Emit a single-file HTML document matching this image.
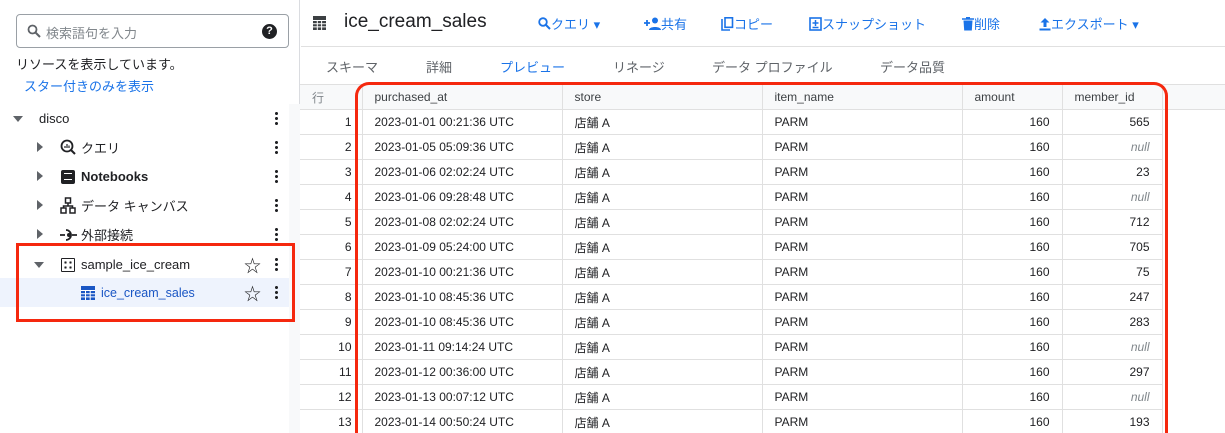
<!DOCTYPE html>
<html style="width:1225px;height:433px;overflow:hidden"><head><meta charset="utf-8"><style>
*{box-sizing:border-box;margin:0;padding:0}
body{width:1225px;height:433px;overflow:hidden;background:#fff;font-family:"Liberation Sans","Noto Sans CJK JP",sans-serif;color:#202124;position:relative}
.abs{position:absolute}
.left{left:0;top:0;width:300px;height:433px;border-right:1px solid #dadce0}
.search{left:16px;top:14px;width:273px;height:34px;border:1px solid #9aa0a6;border-radius:4px}
.tr{position:absolute;left:0;width:289px;height:29px;font-size:13px;display:flex;align-items:center}
.dots{position:absolute;left:275px;top:7px;width:3px;height:15px;background:radial-gradient(circle,#202124 1.4px,transparent 1.6px) 0 0/3px 5px repeat-y}
.tri-r{position:absolute;width:0;height:0;border-left:6px solid #5f6368;border-top:5px solid transparent;border-bottom:5px solid transparent}
.tri-d{position:absolute;width:0;height:0;border-top:6px solid #5f6368;border-left:5px solid transparent;border-right:5px solid transparent}
.tb{font-size:13px;color:#1a73e8;top:14px;display:flex;align-items:center}
.tab{top:57px;font-size:13px;color:#5f6368}
table{position:absolute;left:300px;top:84px;border-collapse:collapse;font-size:12px}
td,th{height:25px;border-bottom:1px solid #e0e0e0;border-right:1px solid #e0e0e0;padding:0 12px;white-space:nowrap;font-weight:normal}
th{background:#f8f9fa;color:#3c4043;text-align:left;border-top:1px solid #e0e0e0;position:relative}
td.n{text-align:right;padding-right:10px;color:#202124}
td.r{text-align:right}
.null{color:#80868b;font-style:italic}
</style></head><body>
<div class="abs left">
 <div class="abs search">
  <svg class="abs" style="left:10px;top:9px" width="14" height="14" viewBox="0 0 14 14"><circle cx="5.5" cy="5.5" r="4" fill="none" stroke="#5f6368" stroke-width="1.8"/><path d="M8.5 8.5L13 13" stroke="#5f6368" stroke-width="2"/></svg>
  <span class="abs" style="left:29px;top:8px;font-size:13px;color:#80868b">検索語句を入力</span>
  <div class="abs" style="left:245px;top:9px;width:15px;height:15px;border-radius:50%;background:#202124;color:#fff;font-size:11px;font-weight:bold;text-align:center;line-height:15px">?</div>
 </div>
 <div class="abs" style="left:16px;top:54px;font-size:13px">リソースを表示しています。</div>
 <div class="abs" style="left:24px;top:76px;font-size:13px;color:#1a73e8">スター付きのみを表示</div>
 <div class="abs" style="left:289px;top:104px;width:11px;height:329px;background:#f8f9fa"></div>

 <div class="tr" style="top:104px"><div class="tri-d" style="left:13px;top:12px"></div><span class="abs" style="left:39px">disco</span><div class="dots"></div></div>
 <div class="tr" style="top:133px"><div class="tri-r" style="left:37px;top:9px"></div>
  <svg class="abs" style="left:60px;top:6px" width="16" height="16" viewBox="0 0 16 16"><circle cx="7" cy="7" r="5.5" fill="none" stroke="#202124" stroke-width="1.8"/><path d="M11 11l4 4" stroke="#202124" stroke-width="2"/><path d="M5 9V7M7 9V5M9 9V6.5" stroke="#202124" stroke-width="1.2"/></svg>
  <span class="abs" style="left:81px">クエリ</span><div class="dots"></div></div>
 <div class="tr" style="top:162px"><div class="tri-r" style="left:37px;top:9px"></div>
  <div class="abs" style="left:61px;top:8px;width:14px;height:14px;background:#202124;border-radius:2px"><div style="margin:3px 3px;height:7px;border-top:1.5px solid #fff;border-bottom:1.5px solid #fff"></div></div>
  <span class="abs" style="left:81px;font-weight:bold">Notebooks</span><div class="dots"></div></div>
 <div class="tr" style="top:191px"><div class="tri-r" style="left:37px;top:9px"></div>
  <svg class="abs" style="left:60px;top:6px" width="16" height="17" viewBox="0 0 16 17"><rect x="5.5" y="1" width="5" height="5" fill="none" stroke="#202124" stroke-width="1.5"/><rect x="1" y="11" width="5" height="5" fill="none" stroke="#202124" stroke-width="1.5"/><rect x="10" y="11" width="5" height="5" fill="none" stroke="#202124" stroke-width="1.5"/><path d="M8 6v3M3.5 11V9h9v2" fill="none" stroke="#202124" stroke-width="1.5"/></svg>
  <span class="abs" style="left:81px">データ キャンバス</span><div class="dots"></div></div>
 <div class="tr" style="top:220px"><div class="tri-r" style="left:37px;top:9px"></div>
  <svg class="abs" style="left:60px;top:8px" width="17" height="14" viewBox="0 0 17 14"><path d="M0 7h5M12 7h5" stroke="#202124" stroke-width="1.8"/><path d="M6 2a5 5 0 1 1 0 10" fill="none" stroke="#202124" stroke-width="1.8"/><circle cx="9" cy="7" r="2" fill="#202124"/></svg>
  <span class="abs" style="left:81px">外部接続</span><div class="dots"></div></div>
 <div class="tr" style="top:250px"><div class="tri-d" style="left:34px;top:12px"></div>
  <div class="abs" style="left:61px;top:8px;width:14px;height:14px;border:1.8px solid #202124;border-radius:1px;background:radial-gradient(circle,#202124 1.1px,transparent 1.3px) 1px 1px/5px 5px"></div>
  <span class="abs" style="left:81px">sample_ice_cream</span><span class="abs" style="left:244px;font-size:17px">☆</span><div class="dots"></div></div>
 <div class="tr" style="top:278px"><div class="abs" style="left:0;top:0;width:289px;height:29px;background:#eef3fd"></div>
  <svg class="abs" style="left:81px;top:8px" width="14" height="14" viewBox="0 0 14 14"><rect width="14" height="14" fill="#1a56c4"/><path d="M0 4.5h14M0 7.7h14M0 10.9h14M4.5 4.5V14M9.2 4.5V14" stroke="#fff" stroke-width="1"/></svg>
  <span class="abs" style="left:101px;color:#1a56c4;font-size:12.5px">ice_cream_sales</span><span class="abs" style="left:244px;font-size:17px">☆</span><div class="dots"></div></div>
 <div class="abs" style="left:16px;top:243px;width:279px;height:79px;border:3px solid #f5280e"></div>
</div>

<svg class="abs" style="left:313px;top:16px" width="13" height="14" viewBox="0 0 13 14"><rect width="13" height="14" fill="#3c4043"/><path d="M0 4.5h13M0 7.7h13M0 10.9h13M4.3 4.5V14M8.6 4.5V14" stroke="#fff" stroke-width="1"/></svg>
<div class="abs" style="left:344px;top:11px;font-size:19px">ice_cream_sales</div>
<div class="abs tb" style="left:538px"><svg width="13" height="13" viewBox="0 0 13 13"><circle cx="5" cy="5" r="3.8" fill="none" stroke="#1a73e8" stroke-width="1.8"/><path d="M8 8l4 4" stroke="#1a73e8" stroke-width="2"/></svg>クエリ ▾</div>
<div class="abs tb" style="left:644px"><svg width="17" height="13" viewBox="0 0 17 13"><path d="M0 6h6M3 3v6" stroke="#1a73e8" stroke-width="1.8"/><circle cx="11" cy="3.5" r="3" fill="#1a73e8"/><path d="M5 13c0-4 12-4 12 0z" fill="#1a73e8"/></svg>共有</div>
<div class="abs tb" style="left:721px"><svg width="13" height="14" viewBox="0 0 13 14"><path d="M1 2v11h8" fill="none" stroke="#1a73e8" stroke-width="1.6"/><rect x="4" y="0.8" width="7.5" height="9.5" fill="none" stroke="#1a73e8" stroke-width="1.6"/></svg>コピー</div>
<div class="abs tb" style="left:809px"><svg width="13" height="14" viewBox="0 0 13 14"><rect x="1" y="1" width="11" height="12" fill="none" stroke="#1a73e8" stroke-width="1.6"/><path d="M6.5 3v6M3.5 6h6M3.5 10.5h6" stroke="#1a73e8" stroke-width="1.5"/></svg>スナップショット</div>
<div class="abs tb" style="left:962px"><svg width="12" height="14" viewBox="0 0 12 14"><path d="M0 2h12M4 0.8h4" stroke="#1a73e8" stroke-width="1.6"/><path d="M1.5 3.5h9l-0.7 10h-7.6z" fill="#1a73e8"/></svg>削除</div>
<div class="abs tb" style="left:1039px"><svg width="12" height="14" viewBox="0 0 12 14"><path d="M6 1l-4.5 4.5h3V10h3V5.5h3z" fill="#1a73e8"/><path d="M0.5 12.5h11" stroke="#1a73e8" stroke-width="2"/></svg>エクスポート ▾</div>
<div class="abs" style="left:301px;top:46px;width:924px;height:1px;background:#e0e0e0"></div>
<div class="abs tab" style="left:326px">スキーマ</div>
<div class="abs tab" style="left:426px">詳細</div>
<div class="abs tab" style="left:500px;color:#1a73e8">プレビュー</div>
<div class="abs tab" style="left:613px">リネージ</div>
<div class="abs tab" style="left:712px">データ プロファイル</div>
<div class="abs tab" style="left:880px">データ品質</div>
<div class="abs" style="left:301px;top:84px;width:924px;height:26px;background:#f8f9fa;border-top:1px solid #e0e0e0;border-bottom:1px solid #e0e0e0"></div>

<table>
<tr><th style="width:62px;padding-left:12px;color:#80868b">行</th><th style="width:200px">purchased_at</th><th style="width:200px">store</th><th style="width:200px">item_name</th><th style="width:100px">amount</th><th style="width:100px">member_id</th></tr>
<tr><td class="n">1</td><td>2023-01-01 00:21:36 UTC</td><td>店舗 A</td><td>PARM</td><td class="r">160</td><td class="r">565</td></tr>
<tr><td class="n">2</td><td>2023-01-05 05:09:36 UTC</td><td>店舗 A</td><td>PARM</td><td class="r">160</td><td class="r null">null</td></tr>
<tr><td class="n">3</td><td>2023-01-06 02:02:24 UTC</td><td>店舗 A</td><td>PARM</td><td class="r">160</td><td class="r">23</td></tr>
<tr><td class="n">4</td><td>2023-01-06 09:28:48 UTC</td><td>店舗 A</td><td>PARM</td><td class="r">160</td><td class="r null">null</td></tr>
<tr><td class="n">5</td><td>2023-01-08 02:02:24 UTC</td><td>店舗 A</td><td>PARM</td><td class="r">160</td><td class="r">712</td></tr>
<tr><td class="n">6</td><td>2023-01-09 05:24:00 UTC</td><td>店舗 A</td><td>PARM</td><td class="r">160</td><td class="r">705</td></tr>
<tr><td class="n">7</td><td>2023-01-10 00:21:36 UTC</td><td>店舗 A</td><td>PARM</td><td class="r">160</td><td class="r">75</td></tr>
<tr><td class="n">8</td><td>2023-01-10 08:45:36 UTC</td><td>店舗 A</td><td>PARM</td><td class="r">160</td><td class="r">247</td></tr>
<tr><td class="n">9</td><td>2023-01-10 08:45:36 UTC</td><td>店舗 A</td><td>PARM</td><td class="r">160</td><td class="r">283</td></tr>
<tr><td class="n">10</td><td>2023-01-11 09:14:24 UTC</td><td>店舗 A</td><td>PARM</td><td class="r">160</td><td class="r null">null</td></tr>
<tr><td class="n">11</td><td>2023-01-12 00:36:00 UTC</td><td>店舗 A</td><td>PARM</td><td class="r">160</td><td class="r">297</td></tr>
<tr><td class="n">12</td><td>2023-01-13 00:07:12 UTC</td><td>店舗 A</td><td>PARM</td><td class="r">160</td><td class="r null">null</td></tr>
<tr><td class="n">13</td><td>2023-01-14 00:50:24 UTC</td><td>店舗 A</td><td>PARM</td><td class="r">160</td><td class="r">193</td></tr>
</table>
<div class="abs" style="left:355px;top:82px;width:813px;height:351px;border:3px solid #f5280e;border-bottom:none;border-radius:14px 14px 0 0"></div>
</body></html>
